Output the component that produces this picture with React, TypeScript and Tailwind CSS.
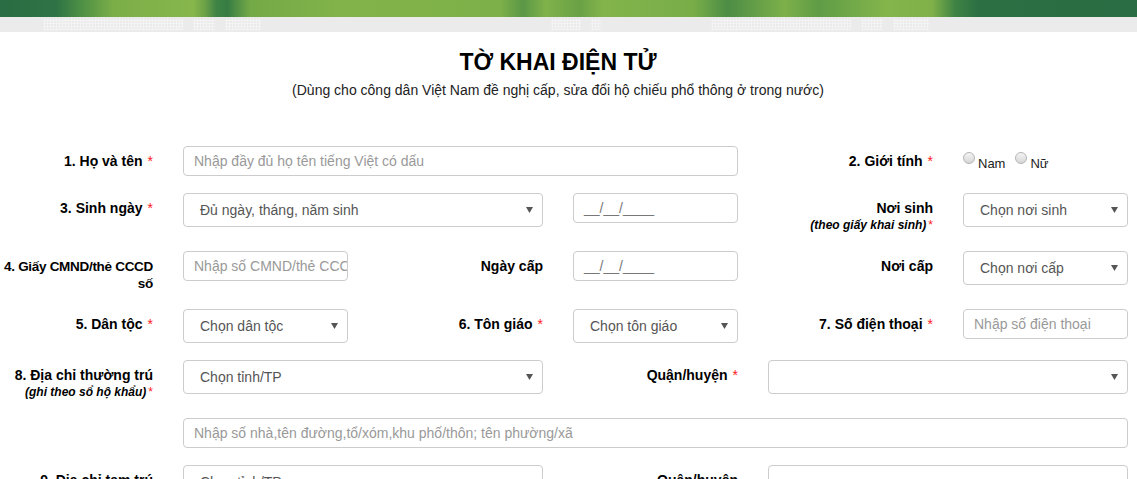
import type { ReactNode } from "react";

const FONT = "font-['Liberation_Sans',Arial,sans-serif]";

function Req() {
  return <span className="text-[#ff1a1a] font-normal ml-[5px]">*</span>;
}

function Label({
  children,
  sub,
  req,
  tight,
}: {
  children: ReactNode;
  sub?: string;
  req?: boolean;
  tight?: boolean;
}) {
  return (
    <div
      className={`px-[15px] pt-[7px] text-right leading-[17px] font-bold text-black ${
        tight ? "text-[13.5px] tracking-[-0.3px]" : "text-[14px]"
      }`}
    >
      <div>
        {children}
        {req && !sub && <Req />}
      </div>
      {sub && (
        <div className="text-[12px] italic">
          {sub}
          {req && <span className="text-[#ff1a1a] font-normal ml-[2px] not-italic">*</span>}
        </div>
      )}
    </div>
  );
}

function TextInput({ placeholder, span = "" }: { placeholder: string; span?: string }) {
  return (
    <div className={`px-[15px] ${span}`}>
      <div className="h-[30px] border border-[#ccc] rounded-[4px] flex items-center px-[10px] text-[14px] text-[#999] whitespace-nowrap overflow-hidden">
        {placeholder}
      </div>
    </div>
  );
}

function DateInput() {
  return (
    <div className="px-[15px]">
      <div className="h-[30px] border border-[#ccc] rounded-[4px] flex items-center px-[10px] text-[14px] text-[#777]">
        __/__/____
      </div>
    </div>
  );
}

function Select({ value = "", span = "" }: { value?: string; span?: string }) {
  return (
    <div className={`px-[15px] ${span}`}>
      <div className="h-[34px] border border-[#ccc] rounded-[4px] flex items-center justify-between pl-[16px] pr-[9px] text-[14px] text-[#555]">
        <span className="whitespace-nowrap">{value}</span>
        <svg width="7" height="6" viewBox="0 0 7 6">
          <path d="M0 0H7L3.5 6Z" fill="#555" />
        </svg>
      </div>
    </div>
  );
}

function Radio({ label }: { label: string }) {
  return (
    <span className="flex items-start gap-[3px] mr-[10px]">
      <span className="w-[12px] h-[12px] mt-[-1px] rounded-full border border-[#b5b5b5] bg-gradient-to-b from-[#f4f4f4] to-[#d6d6d6]" />
      <span className="text-[13px] text-[#222] leading-[14px] mt-[4px]">{label}</span>
    </span>
  );
}

function Row({ children }: { children: ReactNode }) {
  return <div className="grid grid-cols-6 mb-[17px]">{children}</div>;
}

// faint dotted "text" blocks in the grey band under the banner
function Dots({ w }: { w: string }) {
  return (
    <div
      className={`${w} h-[11px] opacity-50 bg-[radial-gradient(circle,#ffffff_45%,transparent_55%)] bg-[length:3px_3px]`}
    />
  );
}

export default function App() {
  return (
    <div className={`w-[1137px] h-[479px] overflow-hidden bg-white ${FONT}`}>
      {/* banner */}
      <div className="h-[17px] bg-[linear-gradient(90deg,#2a6c43_0%,#2f7345_5%,#4b8e45_7%,#7cae48_10%,#86b64c_17%,#6da247_18%,#3f8445_19%,#377c44_20%,#74a947_22%,#82b34a_30%,#7eb049_44%,#5a9746_46%,#80b24a_48%,#6aa146_51%,#83b44b_53%,#78ad48_61%,#4c8d45_64%,#7db049_69%,#5f9c46_72%,#84b54b_78%,#7fb049_82%,#3f8344_84%,#2c6f43_86%,#2a6c43_100%)]" />
      <div className="h-[15px] bg-[#ebebeb] flex items-center pl-[43px] gap-[10px]">
        <Dots w="w-[140px]" />
        <Dots w="w-[22px]" />
        <Dots w="w-[36px]" />
        <div className="w-[270px]" />
        <Dots w="w-[30px]" />
        <Dots w="w-[10px]" />
        <div className="w-[90px]" />
        <Dots w="w-[140px]" />
        <Dots w="w-[22px]" />
        <Dots w="w-[36px]" />
      </div>

      <div className="ml-[-27px] w-[1170px]">
        {/* heading */}
        <div className="text-center pt-[16px]">
          <h1 className="text-[23px] leading-[28px] font-bold text-black">TỜ KHAI ĐIỆN TỬ</h1>
          <p className="text-[14px] leading-[18px] text-[#222] mt-[5px]">
            (Dùng cho công dân Việt Nam đề nghị cấp, sửa đổi hộ chiếu phổ thông ở trong nước)
          </p>
        </div>

        {/* form */}
        <div className="mt-[47px]">
          <Row>
            <Label req>1. Họ và tên</Label>
            <TextInput span="col-span-3" placeholder="Nhập đầy đủ họ tên tiếng Việt có dấu" />
            <Label req>2. Giới tính</Label>
            <div className="px-[15px] pt-[7px] flex">
              <Radio label="Nam" />
              <Radio label="Nữ" />
            </div>
          </Row>

          <Row>
            <Label req>3. Sinh ngày</Label>
            <Select span="col-span-2" value="Đủ ngày, tháng, năm sinh" />
            <DateInput />
            <Label req sub="(theo giấy khai sinh)">Nơi sinh</Label>
            <Select value="Chọn nơi sinh" />
          </Row>

          <Row>
            <Label tight>4. Giấy CMND/thẻ CCCD số</Label>
            <TextInput placeholder="Nhập số CMND/thẻ CCCD" />
            <Label>Ngày cấp</Label>
            <DateInput />
            <Label>Nơi cấp</Label>
            <Select value="Chọn nơi cấp" />
          </Row>

          <Row>
            <Label req>5. Dân tộc</Label>
            <Select value="Chọn dân tộc" />
            <Label req>6. Tôn giáo</Label>
            <Select value="Chọn tôn giáo" />
            <Label req>7. Số điện thoại</Label>
            <TextInput placeholder="Nhập số điện thoại" />
          </Row>

          <Row>
            <Label req sub="(ghi theo sổ hộ khẩu)">8. Địa chỉ thường trú</Label>
            <Select span="col-span-2" value="Chọn tỉnh/TP" />
            <Label req>Quận/huyện</Label>
            <Select span="col-span-2" />
          </Row>

          <Row>
            <div />
            <TextInput
              span="col-span-5"
              placeholder="Nhập số nhà,tên đường,tổ/xóm,khu phố/thôn; tên phường/xã"
            />
          </Row>

          <Row>
            <Label req sub="(ghi theo nơi đang ở)">9. Địa chỉ tạm trú</Label>
            <Select span="col-span-2" value="Chọn tỉnh/TP" />
            <Label>Quận/huyện</Label>
            <Select span="col-span-2" />
          </Row>
        </div>
      </div>
    </div>
  );
}
